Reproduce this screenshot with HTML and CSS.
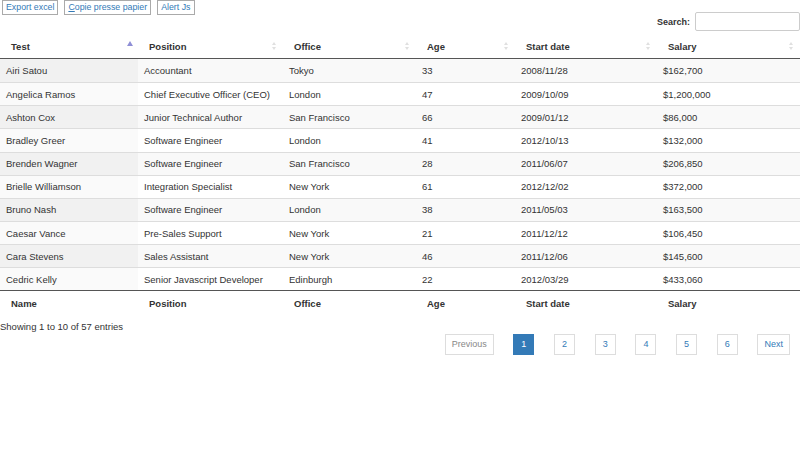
FILE: index.html
```html
<!DOCTYPE html>
<html lang="fr">
<head>
    <meta charset="UTF-8">
    <title>Employés</title>
    <link rel="stylesheet" href="styles.css">
</head>
<body>
    <div class="top-bar">
        <div class="dt-buttons">
            <button class="dt-button">Export excel</button>
            <button class="dt-button"><u>C</u>opie presse papier</button>
            <button class="dt-button">Alert Js</button>
        </div>
        <div class="dt-filter">
            <label>Search: <input type="search"></label>
        </div>
    </div>

    <table class="dataTable">
        <colgroup>
            <col style="width:138px"><col style="width:145px"><col style="width:133px">
            <col style="width:99px"><col style="width:142px"><col style="width:143px">
        </colgroup>
        <thead>
            <tr>
                <th class="sorting-asc"><div class="th-in">Test<span class="sort asc"></span></div></th>
                <th><div class="th-in">Position<span class="sort"></span></div></th>
                <th><div class="th-in">Office<span class="sort"></span></div></th>
                <th><div class="th-in">Age<span class="sort"></span></div></th>
                <th><div class="th-in">Start date<span class="sort"></span></div></th>
                <th><div class="th-in">Salary<span class="sort"></span></div></th>
            </tr>
        </thead>
        <tbody>
            <tr class="odd"><td class="sorted">Airi Satou</td><td>Accountant</td><td>Tokyo</td><td>33</td><td>2008/11/28</td><td>$162,700</td></tr>
            <tr class="even"><td class="sorted">Angelica Ramos</td><td>Chief Executive Officer (CEO)</td><td>London</td><td>47</td><td>2009/10/09</td><td>$1,200,000</td></tr>
            <tr class="odd"><td class="sorted">Ashton Cox</td><td>Junior Technical Author</td><td>San Francisco</td><td>66</td><td>2009/01/12</td><td>$86,000</td></tr>
            <tr class="even"><td class="sorted">Bradley Greer</td><td>Software Engineer</td><td>London</td><td>41</td><td>2012/10/13</td><td>$132,000</td></tr>
            <tr class="odd"><td class="sorted">Brenden Wagner</td><td>Software Engineer</td><td>San Francisco</td><td>28</td><td>2011/06/07</td><td>$206,850</td></tr>
            <tr class="even"><td class="sorted">Brielle Williamson</td><td>Integration Specialist</td><td>New York</td><td>61</td><td>2012/12/02</td><td>$372,000</td></tr>
            <tr class="odd"><td class="sorted">Bruno Nash</td><td>Software Engineer</td><td>London</td><td>38</td><td>2011/05/03</td><td>$163,500</td></tr>
            <tr class="even"><td class="sorted">Caesar Vance</td><td>Pre-Sales Support</td><td>New York</td><td>21</td><td>2011/12/12</td><td>$106,450</td></tr>
            <tr class="odd"><td class="sorted">Cara Stevens</td><td>Sales Assistant</td><td>New York</td><td>46</td><td>2011/12/06</td><td>$145,600</td></tr>
            <tr class="even"><td class="sorted">Cedric Kelly</td><td>Senior Javascript Developer</td><td>Edinburgh</td><td>22</td><td>2012/03/29</td><td>$433,060</td></tr>
        </tbody>
        <tfoot>
            <tr>
                <th>Name</th><th>Position</th><th>Office</th><th>Age</th><th>Start date</th><th>Salary</th>
            </tr>
        </tfoot>
    </table>

    <div class="dt-info">Showing 1 to 10 of 57 entries</div>
    <div class="dt-paginate">
        <a class="page-btn disabled">Previous</a>
        <a class="page-btn current">1</a>
        <a class="page-btn">2</a>
        <a class="page-btn">3</a>
        <a class="page-btn">4</a>
        <a class="page-btn">5</a>
        <a class="page-btn">6</a>
        <a class="page-btn">Next</a>
    </div>
</body>
</html>
```

FILE: styles.css
```css
* {
    margin: 0;
    padding: 0;
    box-sizing: border-box;
}

body {
    font-family: 'Liberation Sans', Arial, sans-serif;
    font-size: 9.5px;
    color: #333;
    background: #fff;
}

.top-bar {
    display: flex;
    justify-content: space-between;
    align-items: flex-start;
    height: 34px;
}

.dt-buttons {
    display: flex;
    gap: 6px;
    padding-left: 2px;
}

.dt-button {
    font-family: inherit;
    font-size: 8.8px;
    color: #337ab7;
    background: #fff;
    border: 1px solid #aaa;
    height: 15px;
    line-height: 13px;
    padding: 0 3px;
}

.dt-button u {
    text-decoration: underline;
}

.dt-filter {
    margin-top: 12px;
}

.dt-filter label {
    font-weight: bold;
    font-size: 9px;
    display: flex;
    align-items: center;
    gap: 5px;
}

.dt-filter input {
    width: 105px;
    height: 19px;
    border: 1px solid #ccc;
    border-radius: 2px;
}

.dataTable {
    width: 800px;
    border-collapse: separate;
    border-spacing: 0;
    table-layout: fixed;
}

.dataTable thead th {
    height: 25px;
    text-align: left;
    font-weight: bold;
    padding: 0 6px 0 11px;
    border-bottom: 1px solid #555;
}

.th-in {
    display: flex;
    justify-content: space-between;
    align-items: center;
}

.sort {
    width: 5px;
    height: 8px;
    position: relative;
}

.sort::before,
.sort::after {
    content: '';
    position: absolute;
    left: 0;
    border-left: 2.5px solid transparent;
    border-right: 2.5px solid transparent;
}

.sort::before {
    top: 0;
    border-bottom: 3px solid #e0e0e0;
}

.sort::after {
    bottom: 0;
    border-top: 3px solid #e0e0e0;
}

.sort.asc::before {
    top: -1px;
    border-left-width: 3px;
    border-right-width: 3px;
    border-bottom: 5px solid #8f8fd6;
}

.sort.asc::after {
    display: none;
}

.dataTable tbody td {
    height: 23.15px;
    padding: 0 6px;
    border-top: 1px solid #ddd;
    white-space: nowrap;
}

.dataTable tbody tr:first-child td {
    border-top: none;
}

.dataTable tbody tr.odd td {
    background: #f9f9f9;
}

.dataTable tbody tr.odd td.sorted {
    background: #f1f1f1;
}

.dataTable tbody tr.even td.sorted {
    background: #fafafa;
}

.dataTable tfoot th {
    height: 25px;
    text-align: left;
    font-weight: bold;
    padding: 0 11px;
    border-top: 1px solid #555;
}

.dt-info {
    margin-top: 6px;
    line-height: 12px;
}

.dt-paginate {
    display: flex;
    justify-content: flex-end;
    gap: 19.7px;
    margin-top: 1px;
    padding-right: 10px;
}

.page-btn {
    display: inline-block;
    min-width: 21px;
    height: 21px;
    line-height: 19px;
    padding: 0 6px;
    text-align: center;
    border: 1px solid #ddd;
    color: #337ab7;
    text-decoration: none;
    font-size: 9px;
}

.page-btn.disabled {
    color: #888;
    padding: 0 6px;
}

.page-btn.current {
    background: #337ab7;
    border-color: #337ab7;
    color: #fff;
}
```
